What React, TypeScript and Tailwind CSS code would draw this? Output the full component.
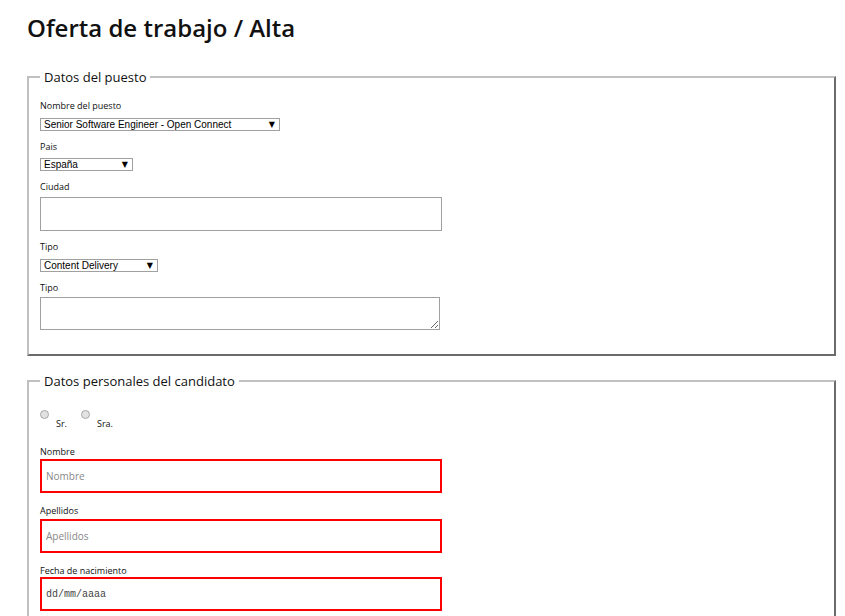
import type {ReactNode} from "react";

const labelCls = "block text-[9px] leading-[12px] font-medium text-[#111] [font-family:'Open_Sans',sans-serif]";

function Field({label, children, gap = "mt-[6px]", top = "mt-[10px]"}: {label: string; children: ReactNode; gap?: string; top?: string}) {
  return (
    <div className={`${top} first:mt-0`}>
      <label className={labelCls}>{label}</label>
      <div className={gap}>{children}</div>
    </div>
  );
}

function Select({value, width}: {value: string; width: string}) {
  return (
    <div className={`relative flex h-[13px] items-center border border-[#a0a0a0] bg-white ${width}`}>
      <span className="pl-[3px] text-[10px] leading-[11px] text-black [font-family:'Liberation_Sans',Arial,sans-serif]">{value}</span>
      <span className="absolute right-[4px] top-[0px] text-[8px] leading-[11px] text-black [font-family:'DejaVu_Sans',sans-serif]">▼</span>
    </div>
  );
}

function RedInput({placeholder, mono}: {placeholder: string; mono?: boolean}) {
  return (
    <input
      placeholder={placeholder}
      className={`block h-[34px] w-[402px] border-2 border-[#ff0000] px-[4px] text-[10px] outline-none ${
        mono
          ? "placeholder:text-[#444] [font-family:'Liberation_Mono',monospace]"
          : "placeholder:text-[#888] [font-family:'Open_Sans',sans-serif]"
      }`}
    />
  );
}

function Box({title, children, className}: {title: string; children: ReactNode; className?: string}) {
  return (
    <fieldset
      className={`border-2 border-t-[#c0c0c0] border-l-[#c0c0c0] border-r-[#6b6b6b] border-b-[#6b6b6b] px-[11px] ${className ?? ""}`}
    >
      <legend className="px-[4px] text-[13px] leading-[18px] font-medium text-[#111] [font-family:'Open_Sans',sans-serif]">
        {title}
      </legend>
      {children}
    </fieldset>
  );
}

function Radio({label, className}: {label: string; className?: string}) {
  return (
    <div className={`flex items-start ${className ?? ""}`}>
      <span className="mt-[1px] h-[9px] w-[9px] rounded-full border border-[#a8a8a8] bg-[#e2e2e2]" />
      <span className="ml-[7px] mt-[9px] text-[9px] leading-[12px] font-medium text-[#111] [font-family:'Open_Sans',sans-serif]">
        {label}
      </span>
    </div>
  );
}

export default function App() {
  return (
    <div className="min-h-[616px] bg-white pl-[27px] pr-[9px] pt-[11px]">
      <h1 className="text-[24px] font-semibold leading-[34px] text-[#111] [font-family:'Open_Sans',sans-serif]">
        Oferta de trabajo / Alta
      </h1>

      <Box title="Datos del puesto" className="mt-[23px] pt-[4px] pb-[24px]">
        <Field label="Nombre del puesto">
          <Select value="Senior Software Engineer - Open Connect" width="w-[240px]" />
        </Field>
        <Field label="Pais" gap="mt-[5px]">
          <Select value="España" width="w-[93px]" />
        </Field>
        <Field label="Ciudad" gap="mt-[4px]">
          <input className="block h-[34px] w-[402px] border border-[#a0a0a0] outline-none" />
        </Field>
        <Field label="Tipo">
          <Select value="Content Delivery" width="w-[118px]" />
        </Field>
        <Field label="Tipo" gap="mt-[3px]">
          <textarea className="block h-[33px] w-[400px] border border-[#a0a0a0] outline-none" />
        </Field>
      </Box>

      <Box title="Datos personales del candidato" className="mt-[16px] pt-[19px] pb-[10px]">
        <div className="flex items-start">
          <Radio label="Sr." />
          <Radio label="Sra." className="ml-[14px]" />
        </div>
        <div className="mt-[16px]">
          <Field label="Nombre" gap="mt-[1px]">
            <RedInput placeholder="Nombre" />
          </Field>
          <Field label="Apellidos" gap="mt-[2px]" top="mt-[12px]">
            <RedInput placeholder="Apellidos" />
          </Field>
          <Field label="Fecha de nacimiento" gap="mt-0" top="mt-[12px]">
            <RedInput placeholder="dd/mm/aaaa" mono />
          </Field>
        </div>
      </Box>
    </div>
  );
}
